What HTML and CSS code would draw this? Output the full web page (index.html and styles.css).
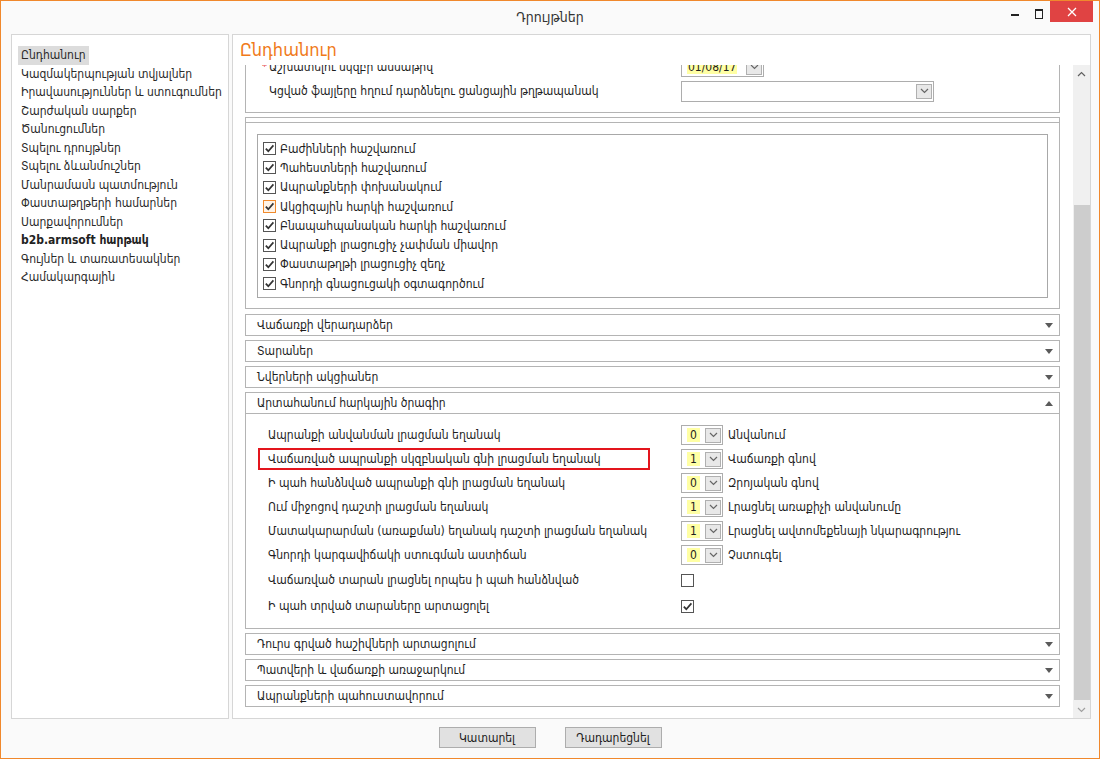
FILE: index.html
```html
<!DOCTYPE html>
<html lang="hy">
<head>
<meta charset="utf-8">
<title>Դրույթներ</title>
<link rel="stylesheet" href="styles.css">
</head>
<body>
<div class="window">
  <div class="titlebar">
    <div></div>
    <div class="title">Դրույթներ</div>
    <div class="controls">
      <span class="ctl-min"></span>
      <span class="ctl-max"></span>
      <span class="ctl-close"><svg width="10" height="10" viewBox="0 0 10 10"><path d="M1 1 L9 9 M9 1 L1 9" stroke="#fff" stroke-width="1.3" fill="none"/></svg></span>
    </div>
  </div>

  <div class="content">
    <div class="sidebar">
      <ul class="nav">
        <li class="selected">Ընդհանուր</li>
        <li>Կազմակերպության տվյալներ</li>
        <li>Իրավասություններ և ստուգումներ</li>
        <li>Շարժական սարքեր</li>
        <li>Ծանուցումներ</li>
        <li>Տպելու դրույթներ</li>
        <li>Տպելու ձևանմուշներ</li>
        <li>Մանրամասն պատմություն</li>
        <li>Փաստաթղթերի համարներ</li>
        <li>Սարքավորումներ</li>
        <li class="bold">b2b.armsoft հարթակ</li>
        <li>Գույներ և տառատեսակներ</li>
        <li>Համակարգային</li>
      </ul>
    </div>

    <div class="main">
      <div class="main-head">Ընդհանուր</div>
      <div class="scroll">
        <div class="pane">
          <div class="scrolled">
            <div class="group g1">
              <div class="frow">
                <div class="flbl"><span class="req">*</span>Աշխատելու սկզբի ամսաթիվ</div>
                <div class="date"><span class="yval">01/08/17</span><span class="ddbtn"><svg width="9" height="6" viewBox="0 0 9 6"><path d="M1 1 L4.5 4.5 L8 1" fill="none" stroke="#666" stroke-width="1.2"/></svg></span></div>
              </div>
              <div class="frow">
                <div class="flbl">Կցված ֆայլերը հղում դարձնելու ցանցային թղթապանակ</div>
                <div class="combo-wide"><span class="ddbtn"><svg width="9" height="6" viewBox="0 0 9 6"><path d="M1 1 L4.5 4.5 L8 1" fill="none" stroke="#666" stroke-width="1.2"/></svg></span></div>
              </div>
            </div>

            <div class="group g2">
              <div class="g2-head"></div>
              <div class="g2-body">
                <div class="checklist">
                  <div class="crow"><span class="cb checked"><svg width="11" height="11" viewBox="0 0 11 11"><path d="M1.8 5.6 L4.3 8.2 L9.4 2.4" fill="none" stroke="#333" stroke-width="1.7"/></svg></span>Բաժինների հաշվառում</div>
                  <div class="crow"><span class="cb checked"><svg width="11" height="11" viewBox="0 0 11 11"><path d="M1.8 5.6 L4.3 8.2 L9.4 2.4" fill="none" stroke="#333" stroke-width="1.7"/></svg></span>Պահեստների հաշվառում</div>
                  <div class="crow"><span class="cb checked"><svg width="11" height="11" viewBox="0 0 11 11"><path d="M1.8 5.6 L4.3 8.2 L9.4 2.4" fill="none" stroke="#333" stroke-width="1.7"/></svg></span>Ապրանքների փոխանակում</div>
                  <div class="crow"><span class="cb checked hover"><svg width="11" height="11" viewBox="0 0 11 11"><path d="M1.8 5.6 L4.3 8.2 L9.4 2.4" fill="none" stroke="#333" stroke-width="1.7"/></svg></span>Ակցիզային հարկի հաշվառում</div>
                  <div class="crow"><span class="cb checked"><svg width="11" height="11" viewBox="0 0 11 11"><path d="M1.8 5.6 L4.3 8.2 L9.4 2.4" fill="none" stroke="#333" stroke-width="1.7"/></svg></span>Բնապահպանական հարկի հաշվառում</div>
                  <div class="crow"><span class="cb checked"><svg width="11" height="11" viewBox="0 0 11 11"><path d="M1.8 5.6 L4.3 8.2 L9.4 2.4" fill="none" stroke="#333" stroke-width="1.7"/></svg></span>Ապրանքի լրացուցիչ չափման միավոր</div>
                  <div class="crow"><span class="cb checked"><svg width="11" height="11" viewBox="0 0 11 11"><path d="M1.8 5.6 L4.3 8.2 L9.4 2.4" fill="none" stroke="#333" stroke-width="1.7"/></svg></span>Փաստաթղթի լրացուցիչ զեղչ</div>
                  <div class="crow"><span class="cb checked"><svg width="11" height="11" viewBox="0 0 11 11"><path d="M1.8 5.6 L4.3 8.2 L9.4 2.4" fill="none" stroke="#333" stroke-width="1.7"/></svg></span>Գնորդի գնացուցակի օգտագործում</div>
                </div>
              </div>
            </div>

            <div class="sec first"><div class="sec-head"><span class="sec-title">Վաճառքի վերադարձեր</span><span class="arrow-down"></span></div></div>
            <div class="sec"><div class="sec-head"><span class="sec-title">Տարաներ</span><span class="arrow-down"></span></div></div>
            <div class="sec"><div class="sec-head"><span class="sec-title">Նվերների ակցիաներ</span><span class="arrow-down"></span></div></div>
            <div class="sec open">
              <div class="sec-head"><span class="sec-title">Արտահանում հարկային ծրագիր</span><span class="arrow-up"></span></div>
              <div class="sec-body">
                <div class="orow">
                  <div class="ocol"><span class="olbl">Ապրանքի անվանման լրացման եղանակ</span></div>
                  <div class="combo"><span class="yval">0</span><span class="ddbtn"><svg width="9" height="6" viewBox="0 0 9 6"><path d="M1 1 L4.5 4.5 L8 1" fill="none" stroke="#666" stroke-width="1.2"/></svg></span></div>
                  <span class="cval">Անվանում</span>
                </div>
                <div class="orow">
                  <div class="ocol"><span class="olbl hl">Վաճառված ապրանքի սկզբնական գնի լրացման եղանակ</span></div>
                  <div class="combo"><span class="yval">1</span><span class="ddbtn"><svg width="9" height="6" viewBox="0 0 9 6"><path d="M1 1 L4.5 4.5 L8 1" fill="none" stroke="#666" stroke-width="1.2"/></svg></span></div>
                  <span class="cval">Վաճառքի գնով</span>
                </div>
                <div class="orow">
                  <div class="ocol"><span class="olbl">Ի պահ հանձնված ապրանքի գնի լրացման եղանակ</span></div>
                  <div class="combo"><span class="yval">0</span><span class="ddbtn"><svg width="9" height="6" viewBox="0 0 9 6"><path d="M1 1 L4.5 4.5 L8 1" fill="none" stroke="#666" stroke-width="1.2"/></svg></span></div>
                  <span class="cval">Զրոյական գնով</span>
                </div>
                <div class="orow">
                  <div class="ocol"><span class="olbl">Ում միջոցով դաշտի լրացման եղանակ</span></div>
                  <div class="combo"><span class="yval">1</span><span class="ddbtn"><svg width="9" height="6" viewBox="0 0 9 6"><path d="M1 1 L4.5 4.5 L8 1" fill="none" stroke="#666" stroke-width="1.2"/></svg></span></div>
                  <span class="cval">Լրացնել առաքիչի անվանումը</span>
                </div>
                <div class="orow">
                  <div class="ocol"><span class="olbl">Մատակարարման (առաքման) եղանակ դաշտի լրացման եղանակ</span></div>
                  <div class="combo"><span class="yval">1</span><span class="ddbtn"><svg width="9" height="6" viewBox="0 0 9 6"><path d="M1 1 L4.5 4.5 L8 1" fill="none" stroke="#666" stroke-width="1.2"/></svg></span></div>
                  <span class="cval">Լրացնել ավտոմեքենայի նկարագրությու</span>
                </div>
                <div class="orow">
                  <div class="ocol"><span class="olbl">Գնորդի կարգավիճակի ստուգման աստիճան</span></div>
                  <div class="combo"><span class="yval">0</span><span class="ddbtn"><svg width="9" height="6" viewBox="0 0 9 6"><path d="M1 1 L4.5 4.5 L8 1" fill="none" stroke="#666" stroke-width="1.2"/></svg></span></div>
                  <span class="cval">Չստուգել</span>
                </div>
                <div class="orow tall">
                  <div class="ocol"><span class="olbl">Վաճառված տարան լրացնել որպես ի պահ հանձնված</span></div>
                  <span class="cb"></span>
                </div>
                <div class="orow tall">
                  <div class="ocol"><span class="olbl">Ի պահ տրված տարաները արտացոլել</span></div>
                  <span class="cb checked"><svg width="11" height="11" viewBox="0 0 11 11"><path d="M1.8 5.6 L4.3 8.2 L9.4 2.4" fill="none" stroke="#333" stroke-width="1.7"/></svg></span>
                </div>
              </div>
            </div>
            <div class="sec"><div class="sec-head"><span class="sec-title">Դուրս գրված հաշիվների արտացոլում</span><span class="arrow-down"></span></div></div>
            <div class="sec"><div class="sec-head"><span class="sec-title">Պատվերի և վաճառքի առաջարկում</span><span class="arrow-down"></span></div></div>
            <div class="sec"><div class="sec-head"><span class="sec-title">Ապրանքների պահուստավորում</span><span class="arrow-down"></span></div></div>
          </div>
        </div>
        <div class="sbar">
          <div class="sbtn"><svg width="9" height="6" viewBox="0 0 9 6"><path d="M1 5 L4.5 1.5 L8 5" fill="none" stroke="#606060" stroke-width="1.2"/></svg></div>
          <div class="strack"><div class="sthumb"></div></div>
          <div class="sbtn"><svg width="9" height="6" viewBox="0 0 9 6"><path d="M1 1 L4.5 4.5 L8 1" fill="none" stroke="#a0a0a0" stroke-width="1.2"/></svg></div>
        </div>
      </div>
    </div>
  </div>

  <div class="footer">
    <button class="btn">Կատարել</button>
    <button class="btn">Դադարեցնել</button>
  </div>
</div>
</body>
</html>
```

FILE: styles.css
```css
* { box-sizing: border-box; }
html, body { margin: 0; padding: 0; }
body {
  width: 1100px;
  height: 760px;
  overflow: hidden;
  background: #ffffff;
  font-family: "DejaVu Sans Condensed", "DejaVu Sans", sans-serif;
  font-stretch: semi-condensed;
  font-size: 12px;
  color: #1e1e1e;
}
.window {
  width: 1100px;
  height: 759px;
  border: 1px solid #f0882c;
  background: #fafafa;
  display: flex;
  flex-direction: column;
}

/* title bar */
.titlebar {
  height: 31px;
  display: grid;
  grid-template-columns: 1fr auto 1fr;
  align-items: center;
}
.title {
  font-size: 14px;
  color: #333;
  padding-top: 1px;
}
.controls {
  justify-self: end;
  align-self: start;
  display: flex;
  align-items: flex-start;
  margin-right: 6px;
}
.ctl-min {
  width: 8px;
  height: 2px;
  background: #222;
  margin-top: 13px;
  margin-right: 16px;
}
.ctl-max {
  width: 8px;
  height: 10px;
  border: 1px solid #222;
  border-top-width: 2px;
  margin-top: 8px;
  margin-right: 7px;
}
.ctl-close {
  width: 43px;
  height: 21px;
  background: #e04343;
  display: flex;
  align-items: center;
  justify-content: center;
}

/* content */
.content {
  display: flex;
  gap: 3px;
  padding: 2px 8px 0 10px;
}
.sidebar {
  width: 218px;
  height: 685px;
  border: 1px solid #d6d6d6;
  background: #fff;
}
.nav {
  list-style: none;
  margin: 0;
  padding: 11px 0 0 6px;
}
.nav li {
  width: fit-content;
  height: 18.5px;
  line-height: 18.5px;
  padding: 0 3px;
  color: #2a2a2a;
  white-space: nowrap;
}
.nav li.selected { background: #dcdcdc; }
.nav li.bold { font-weight: bold; color: #222; }

.main {
  width: 859px;
  height: 685px;
  border: 1px solid #d6d6d6;
  background: #fff;
  display: flex;
  flex-direction: column;
}
.main-head {
  height: 30px;
  line-height: 29px;
  padding-left: 7px;
  font-size: 18px;
  color: #f07a1a;
}
.scroll {
  flex: 1;
  display: flex;
  overflow: hidden;
}
.pane {
  flex: 1;
  overflow: hidden;
  padding: 0 13px 0 12px;
}
.scrolled { margin-top: -11px; }

.group {
  border: 1px solid #b4b4b4;
  background: #fff;
}
.g1 { padding-bottom: 9px; }
.frow {
  display: flex;
  align-items: center;
  height: 24px;
}
.flbl {
  width: 435px;
  padding-left: 23px;
  white-space: nowrap;
}
.req {
  display: inline-block;
  width: 7px;
  margin-left: -7px;
  color: #e02020;
  font-size: 11px;
  vertical-align: top;
}
.date {
  width: 83px;
  height: 19px;
  border: 1px solid #adadad;
  display: flex;
  align-items: center;
  padding-left: 5px;
}
.combo-wide {
  width: 253px;
  height: 21px;
  border: 1px solid #adadad;
  display: flex;
  align-items: center;
  justify-content: flex-end;
}
.yval {
  background: #ffffa4;
  line-height: 14px;
  height: 14px;
  padding: 0 1px;
}
.ddbtn {
  width: 16px;
  height: 15px;
  border: 1px solid #b0b0b0;
  background: #e8e8e8;
  display: flex;
  align-items: center;
  justify-content: center;
  margin-left: auto;
  margin-right: 1px;
}

.g2 { margin-top: 4px; }
.g2-head {
  height: 5px;
  border-bottom: 1px solid #b4b4b4;
}
.g2-body { padding: 11px 11px 10px 11px; }
.checklist {
  height: 164px;
  border: 1px solid #a8a8a8;
  padding-top: 4px;
}
.crow {
  display: flex;
  align-items: center;
  height: 19.3px;
  padding-left: 5px;
  white-space: nowrap;
}
.cb {
  width: 13px;
  height: 13px;
  border: 1px solid #555;
  background: #fff;
  display: inline-flex;
  align-items: center;
  justify-content: center;
  flex: none;
}
.crow .cb { margin-right: 4px; }
.cb.hover {
  border-color: #f08a2c;
  background: #fff3e6;
}

.sec {
  margin-top: 4px;
  border: 1px solid #b4b4b4;
  background: #fff;
}
.sec.first { margin-top: 5px; }
.sec-head {
  height: 20px;
  display: flex;
  align-items: center;
  justify-content: space-between;
  padding: 0 6px 0 11px;
}
.sec.open .sec-head {
  height: 21px;
  border-bottom: 1px solid #b4b4b4;
}
.arrow-down {
  width: 0;
  height: 0;
  border-left: 4px solid transparent;
  border-right: 4px solid transparent;
  border-top: 5px solid #5a5a5a;
}
.arrow-up {
  width: 0;
  height: 0;
  border-left: 4px solid transparent;
  border-right: 4px solid transparent;
  border-bottom: 5px solid #5a5a5a;
}
.sec-body { padding: 9px 0 9px 0; }
.orow {
  display: flex;
  align-items: center;
  height: 24px;
}
.orow.tall { height: 26px; }
.ocol {
  width: 435px;
  padding-left: 12px;
}
.olbl {
  display: inline-block;
  height: 22px;
  line-height: 18px;
  border: 2px solid transparent;
  padding: 0 8px;
  white-space: nowrap;
}
.olbl.hl {
  width: 392px;
  border-color: #e3151d;
}
.combo {
  width: 42px;
  height: 20px;
  border: 1px solid #adadad;
  display: flex;
  align-items: center;
  padding-left: 5px;
}
.combo .yval {
  width: 13px;
  text-align: center;
  padding: 0;
}
.cval {
  margin-left: 5px;
  white-space: nowrap;
}

/* scrollbar */
.sbar {
  width: 17px;
  background: #f0f0f0;
  display: flex;
  flex-direction: column;
}
.sbtn {
  height: 17px;
  display: flex;
  align-items: center;
  justify-content: center;
}
.strack { flex: 1; }
.sthumb {
  margin-top: 123px;
  margin-left: 1px;
  height: 495px;
  background: #cdcdcd;
}

/* footer */
.footer {
  display: flex;
  justify-content: center;
  gap: 29px;
  padding-top: 8px;
}
.btn {
  width: 97px;
  height: 21px;
  border: 1px solid #adadad;
  background: #e1e1e1;
  font-family: "DejaVu Sans Condensed", "DejaVu Sans", sans-serif;
  font-stretch: semi-condensed;
  font-size: 12px;
  color: #222;
  padding: 0;
}
```
